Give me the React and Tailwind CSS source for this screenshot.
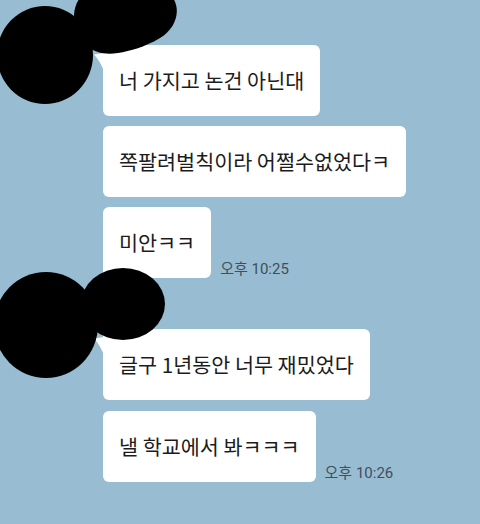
import React from 'react';

const groups = [
  {
    time: '오후 10:25',
    lines: ['너 가지고 논건 아닌대', '쪽팔려벌칙이라 어쩔수없었다ㅋ', '미안ㅋㅋ'],
    gap: 'gap-[10px]',
  },
  {
    time: '오후 10:26',
    lines: ['글구 1년동안 너무 재밌었다', '낼 학교에서 봐ㅋㅋㅋ'],
    gap: 'gap-[11px]',
  },
];

function Bubble({ text, first, time }) {
  return (
    <div className="flex items-end gap-[9px]">
      <div className="relative flex h-[71px] items-center rounded-[6px] bg-white px-4 text-[20.7px] leading-none text-[#1c1c1c]">
        {/* tail on the first bubble of a group */}
        {first && (
          <svg className="absolute left-[-10px] top-[8px]" width="11" height="20" viewBox="0 0 11 20">
            <path d="M11,0 L1,1.5 Q7,8 11,18 Z" fill="#ffffff" />
          </svg>
        )}
        <span>{text}</span>
      </div>
      {time && (
        <span className="mb-[1px] whitespace-nowrap text-[15px] leading-4 text-[#3f4f5b] font-['Roboto','Noto_Sans_CJK_KR',sans-serif]">
          {time}
        </span>
      )}
    </div>
  );
}

export default function App() {
  return (
    <div className="relative h-[524px] w-[480px] overflow-hidden bg-[#98bcd2] font-['Noto_Sans_CJK_KR','Noto_Sans',sans-serif]">
      <div className="flex flex-col gap-[51px] pl-[103px] pt-[45px]">
        {groups.map((g, gi) => (
          <div key={gi} className={`flex flex-col ${g.gap}`}>
            {g.lines.map((line, i) => (
              <Bubble
                key={i}
                text={line}
                first={i === 0}
                time={i === g.lines.length - 1 ? g.time : null}
              />
            ))}
          </div>
        ))}
      </div>

      {/* scribbled-out profile pictures */}
      <svg className="pointer-events-none absolute left-0 top-0" width="480" height="524" viewBox="0 0 480 524">
        <ellipse cx="45" cy="55" rx="48" ry="49" fill="#000" />
        <path d="M74,15 C76,-22 130,-26 162,-12 C184,0 180,26 160,38 C145,47 130,51 118,53 C98,56 78,50 74,15 Z" fill="#000" />
        <ellipse cx="46" cy="325" rx="52" ry="53" fill="#000" />
        <ellipse cx="123" cy="304" rx="42" ry="36" fill="#000" />
      </svg>
    </div>
  );
}
